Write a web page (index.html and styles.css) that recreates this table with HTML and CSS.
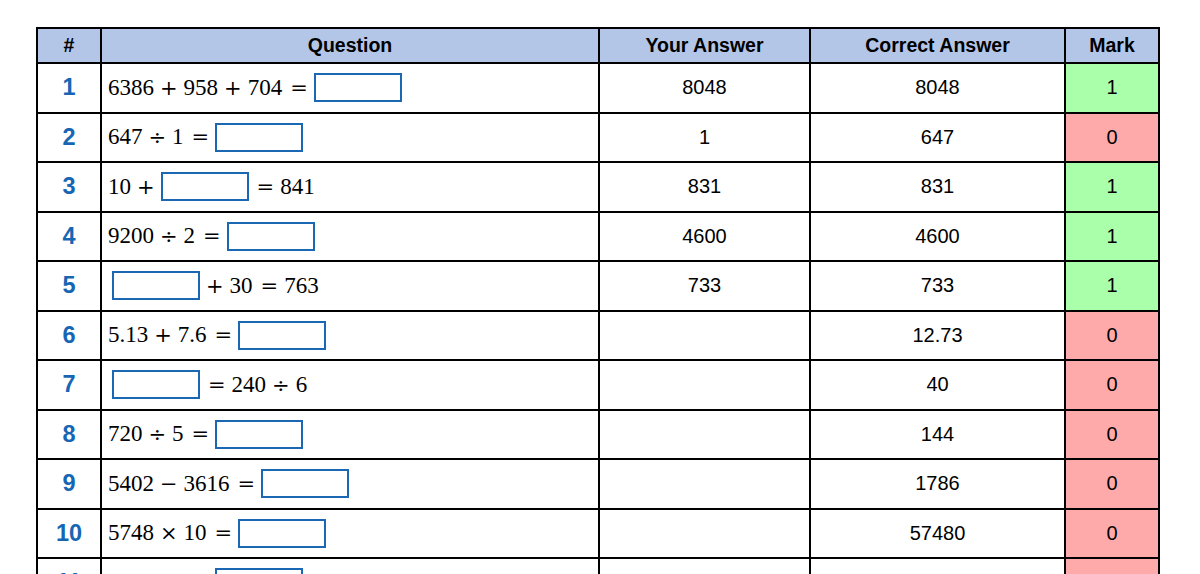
FILE: index.html
```html
<!DOCTYPE html>
<html>
<head>
<meta charset="utf-8">
<link rel="stylesheet" href="styles.css">
</head>
<body>
<div class="page">
<table class="quiz">
  <colgroup>
    <col class="c-num"><col class="c-q"><col class="c-ya"><col class="c-ca"><col class="c-mark">
  </colgroup>
  <thead>
    <tr><th>#</th><th>Question</th><th>Your Answer</th><th>Correct Answer</th><th>Mark</th></tr>
  </thead>
  <tbody>
    <tr>
      <td class="num">1</td>
      <td class="q"><div class="math"><span>6386</span><span class="bin">+</span><span>958</span><span class="bin">+</span><span>704</span><span class="rel">=</span><span class="box"></span></div></td>
      <td class="ans">8048</td><td class="ans">8048</td><td class="mark ok">1</td>
    </tr>
    <tr>
      <td class="num">2</td>
      <td class="q"><div class="math"><span>647</span><span class="bin">÷</span><span>1</span><span class="rel">=</span><span class="box"></span></div></td>
      <td class="ans">1</td><td class="ans">647</td><td class="mark bad">0</td>
    </tr>
    <tr>
      <td class="num">3</td>
      <td class="q"><div class="math"><span>10</span><span class="bin">+</span><span class="box"></span><span class="rel">=</span><span>841</span></div></td>
      <td class="ans">831</td><td class="ans">831</td><td class="mark ok">1</td>
    </tr>
    <tr>
      <td class="num">4</td>
      <td class="q"><div class="math"><span>9200</span><span class="bin">÷</span><span>2</span><span class="rel">=</span><span class="box"></span></div></td>
      <td class="ans">4600</td><td class="ans">4600</td><td class="mark ok">1</td>
    </tr>
    <tr>
      <td class="num">5</td>
      <td class="q"><div class="math"><span class="box lead"></span><span class="bin">+</span><span>30</span><span class="rel">=</span><span>763</span></div></td>
      <td class="ans">733</td><td class="ans">733</td><td class="mark ok">1</td>
    </tr>
    <tr>
      <td class="num">6</td>
      <td class="q"><div class="math"><span>5.13</span><span class="bin">+</span><span>7.6</span><span class="rel">=</span><span class="box"></span></div></td>
      <td class="ans"></td><td class="ans">12.73</td><td class="mark bad">0</td>
    </tr>
    <tr>
      <td class="num">7</td>
      <td class="q"><div class="math"><span class="box lead"></span><span class="rel">=</span><span>240</span><span class="bin">÷</span><span>6</span></div></td>
      <td class="ans"></td><td class="ans">40</td><td class="mark bad">0</td>
    </tr>
    <tr>
      <td class="num">8</td>
      <td class="q"><div class="math"><span>720</span><span class="bin">÷</span><span>5</span><span class="rel">=</span><span class="box"></span></div></td>
      <td class="ans"></td><td class="ans">144</td><td class="mark bad">0</td>
    </tr>
    <tr>
      <td class="num">9</td>
      <td class="q"><div class="math"><span>5402</span><span class="bin">−</span><span>3616</span><span class="rel">=</span><span class="box"></span></div></td>
      <td class="ans"></td><td class="ans">1786</td><td class="mark bad">0</td>
    </tr>
    <tr>
      <td class="num">10</td>
      <td class="q"><div class="math"><span>5748</span><span class="bin">×</span><span>10</span><span class="rel">=</span><span class="box"></span></div></td>
      <td class="ans"></td><td class="ans">57480</td><td class="mark bad">0</td>
    </tr>
    <tr>
      <td class="num">11</td>
      <td class="q"><div class="math"><span>100</span><span class="bin">−</span><span>6</span><span class="rel">=</span><span class="box"></span></div></td>
      <td class="ans"></td><td class="ans">94</td><td class="mark bad">0</td>
    </tr>
  </tbody>
</table>
</div>
</body>
</html>
```

FILE: styles.css
```css
html, body {
  margin: 0;
  padding: 0;
  background: #ffffff;
}

body {
  font-family: "Liberation Sans", Arial, sans-serif;
  color: #000;
}

.page {
  padding: 27px 0 0 36px;
}

.quiz {
  border-collapse: collapse;
  table-layout: fixed;
  width: 1124px;
}

.c-num { width: 64px; }
.c-q { width: 498px; }
.c-ya { width: 211px; }
.c-ca { width: 255px; }
.c-mark { width: 94px; }

.quiz th,
.quiz td {
  border: 2px solid #000;
  padding: 0;
  box-sizing: border-box;
}

.quiz th {
  background: #b4c6e7;
  font-size: 19.5px;
  font-weight: bold;
  height: 35px;
  text-align: center;
}

.quiz td {
  height: 49.5px;
  text-align: center;
  font-size: 20px;
}

.quiz td.num {
  color: #1666b4;
  font-weight: bold;
  font-size: 23.5px;
}

.quiz td.q {
  text-align: left;
  padding-left: 6px;
}

.math {
  display: flex;
  align-items: center;
  font-family: "Liberation Serif", "Times New Roman", serif;
  font-size: 23px;
  white-space: nowrap;
}

.math .bin,
.math .rel {
  font-family: "DejaVu Serif", serif;
  font-size: 21px;
  font-weight: 300;
}

.math .bin {
  margin: 0 6px;
}

.math .rel {
  margin: 0 6px 0 8px;
}

.math .box {
  display: inline-block;
  width: 88px;
  height: 29px;
  box-sizing: border-box;
  border: 2px solid #1a67b4;
}

.math .box.lead {
  margin-left: 4px;
}

.mark.ok {
  background: #aaffaa;
}

.mark.bad {
  background: #ffaaaa;
}
```
